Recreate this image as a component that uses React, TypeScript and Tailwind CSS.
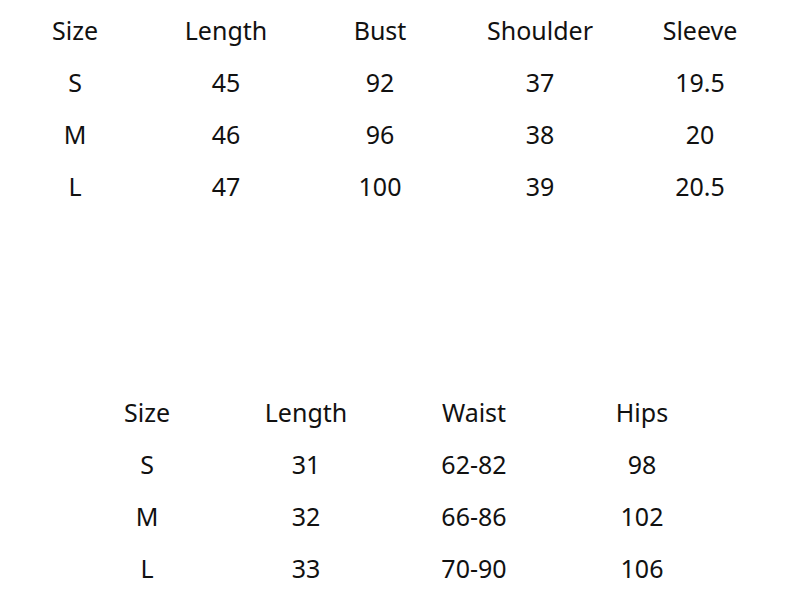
const top = {
  head: ["Size", "Length", "Bust", "Shoulder", "Sleeve"],
  rows: [
    ["S", "45", "92", "37", "19.5"],
    ["M", "46", "96", "38", "20"],
    ["L", "47", "100", "39", "20.5"],
  ],
};

const bottom = {
  head: ["Size", "Length", "Waist", "Hips"],
  rows: [
    ["S", "31", "62-82", "98"],
    ["M", "32", "66-86", "102"],
    ["L", "33", "70-90", "106"],
  ],
};

export default function App() {
  return (
    <main className="h-[595px] w-[805px] bg-white pt-[5px] text-[25px] text-[#111] [font-family:'Noto_Sans',sans-serif]">
      <div className="grid grid-cols-[150px_152px_156px_164px_156px]">
        {[top.head, ...top.rows].map((row, i) =>
          row.map((cell, j) => (
            <div key={`${i}-${j}`} className="flex h-[52px] items-center justify-center">
              {cell}
            </div>
          ))
        )}
      </div>
      <div className="ml-[80px] mt-[174px] grid w-fit grid-cols-[134px_184px_152px_184px]">
        {[bottom.head, ...bottom.rows].map((row, i) =>
          row.map((cell, j) => (
            <div key={`${i}-${j}`} className="flex h-[52px] items-center justify-center">
              {cell}
            </div>
          ))
        )}
      </div>
    </main>
  );
}
